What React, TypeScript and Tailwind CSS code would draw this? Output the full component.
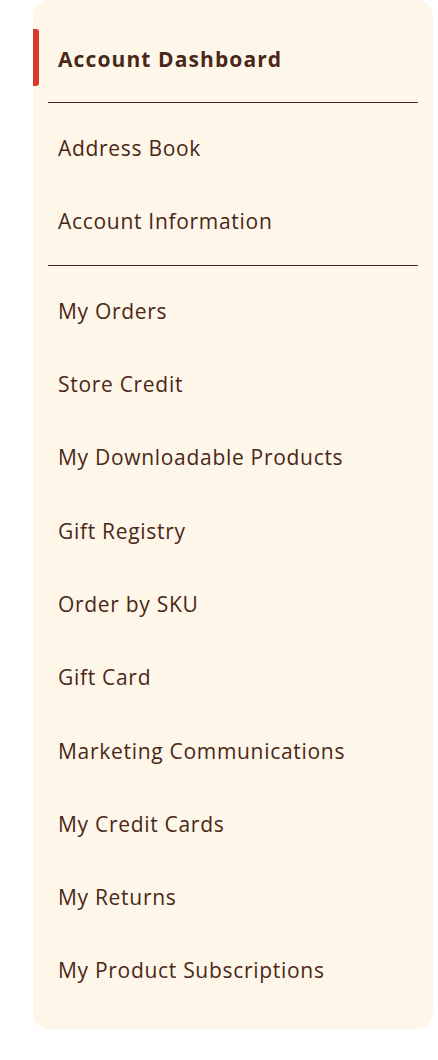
import React from 'react';

const groups: string[][] = [
  ['Account Dashboard'],
  ['Address Book', 'Account Information'],
  [
    'My Orders',
    'Store Credit',
    'My Downloadable Products',
    'Gift Registry',
    'Order by SKU',
    'Gift Card',
    'Marketing Communications',
    'My Credit Cards',
    'My Returns',
    'My Product Subscriptions',
  ],
];

const App: React.FC = () => {
  return (
    <div className="w-[438px] h-[1060px] bg-white pl-[33px] pr-[5px]">
      <nav
        className="bg-[#fef6e8] rounded-2xl pt-[22px] pb-[22px] px-[15px] text-[#4a2718]"
        style={{ fontFamily: '"Open Sans", sans-serif' }}
      >
        {groups.map((group, gi) => (
          <div key={gi}>
            {gi > 0 && <div className="h-px bg-[#4a2718] mt-[7px] mb-[8px]" />}
            {group.map((label) => {
              const active = label === 'Account Dashboard';
              return (
                <div key={label} className="relative h-[73.3px] flex items-center pl-[10px] pt-[2px]">
                  {active && (
                    <span className="absolute left-[-15px] top-[7px] w-[6px] h-[57px] bg-[#d93a2c] rounded-r-[3px]" />
                  )}
                  <span
                    className={
                      active
                        ? 'text-[21px] font-bold tracking-[1.1px]'
                        : 'text-[21px] tracking-[0.7px]'
                    }
                  >
                    {label}
                  </span>
                </div>
              );
            })}
          </div>
        ))}
      </nav>
    </div>
  );
};

export default App;
